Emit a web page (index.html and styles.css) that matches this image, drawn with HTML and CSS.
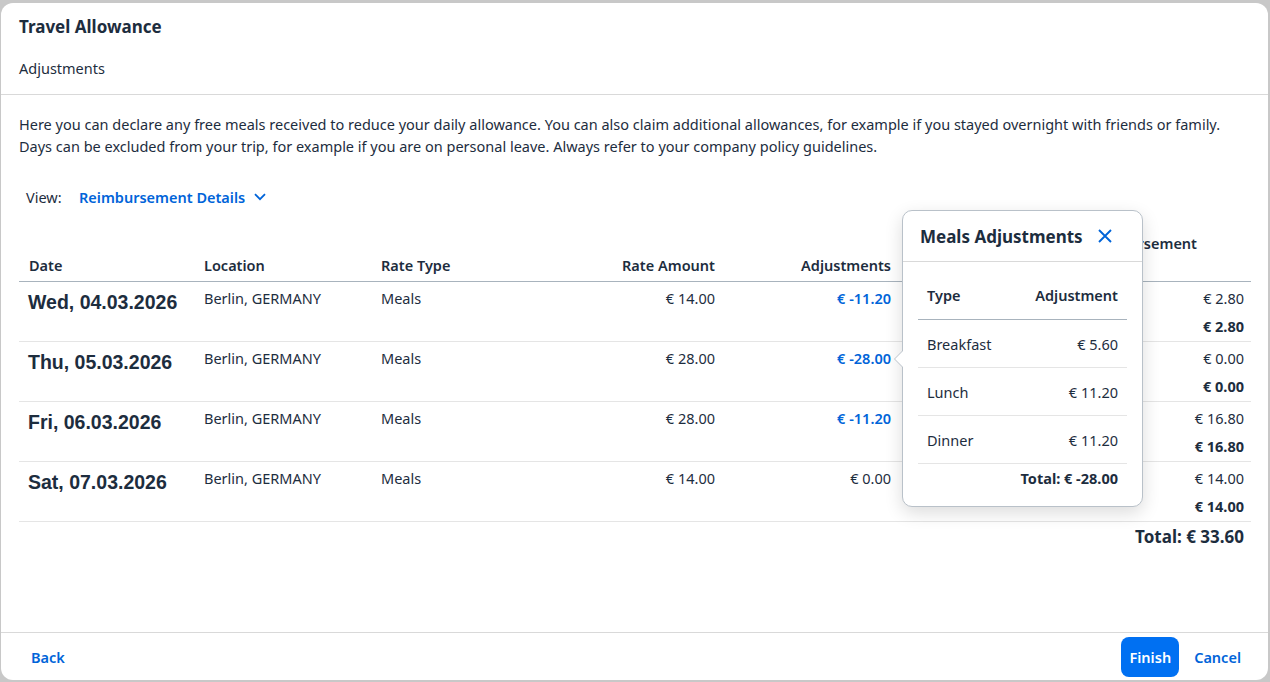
FILE: index.html
```html
<!DOCTYPE html>
<html>
<head>
    <title>Travel Allowance - Adjustments</title>
    <link rel="stylesheet" href="styles.css">
</head>
<body>
    <div class="dialog">
        <div class="dialog-header">
            <div class="title">Travel Allowance</div>
            <div class="subtitle">Adjustments</div>
        </div>

        <div class="dialog-content">
            <p class="intro">Here you can declare any free meals received to reduce your daily allowance. You can also claim additional allowances, for example if you stayed overnight with friends or family. Days can be excluded from your trip, for example if you are on personal leave. Always refer to your company policy guidelines.</p>

            <div class="view-row">
                <span class="view-label">View:</span>
                <a href="#" class="view-select">Reimbursement Details
                    <svg class="chevron" width="12" height="8" viewBox="0 0 12 8"><path d="M1 1.2 L6 6.2 L11 1.2" fill="none" stroke="#0064d9" stroke-width="1.8"/></svg>
                </a>
            </div>

            <div class="table-wrap">
                <table class="days">
                    <colgroup>
                        <col style="width:175px">
                        <col style="width:177px">
                        <col style="width:170px">
                        <col style="width:184px">
                        <col style="width:176px">
                        <col style="width:350px">
                    </colgroup>
                    <thead>
                        <tr>
                            <th>Date</th>
                            <th>Location</th>
                            <th>Rate Type</th>
                            <th class="num">Rate Amount</th>
                            <th class="num">Adjustments</th>
                            <th class="num reimb-head">Reimbursement<br>&nbsp;</th>
                        </tr>
                    </thead>
                    <tbody>
                        <tr>
                            <td class="date">Wed, 04.03.2026</td>
                            <td>Berlin, GERMANY</td>
                            <td>Meals</td>
                            <td class="num">€ 14.00</td>
                            <td class="num"><a href="#" class="adj-link">€ -11.20</a></td>
                            <td class="num reimb"><div>€ 2.80</div><div class="sum">€ 2.80</div></td>
                        </tr>
                        <tr>
                            <td class="date">Thu, 05.03.2026</td>
                            <td>Berlin, GERMANY</td>
                            <td>Meals</td>
                            <td class="num">€ 28.00</td>
                            <td class="num"><a href="#" class="adj-link">€ -28.00</a></td>
                            <td class="num reimb"><div>€ 0.00</div><div class="sum">€ 0.00</div></td>
                        </tr>
                        <tr>
                            <td class="date">Fri, 06.03.2026</td>
                            <td>Berlin, GERMANY</td>
                            <td>Meals</td>
                            <td class="num">€ 28.00</td>
                            <td class="num"><a href="#" class="adj-link">€ -11.20</a></td>
                            <td class="num reimb"><div>€ 16.80</div><div class="sum">€ 16.80</div></td>
                        </tr>
                        <tr>
                            <td class="date">Sat, 07.03.2026</td>
                            <td>Berlin, GERMANY</td>
                            <td>Meals</td>
                            <td class="num">€ 14.00</td>
                            <td class="num">€ 0.00</td>
                            <td class="num reimb"><div>€ 14.00</div><div class="sum">€ 14.00</div></td>
                        </tr>
                    </tbody>
                </table>
                <div class="grand-total">Total: € 33.60</div>

                <!-- popover opened from the Thu adjustment -->
                <div class="popover">
                    <span class="arrow"></span>
                    <div class="popover-header">
                        <span class="popover-title">Meals Adjustments</span>
                        <svg class="close" width="14" height="14" viewBox="0 0 14 14"><path d="M1 1 L13 13 M13 1 L1 13" stroke="#0064d9" stroke-width="1.9"/></svg>
                    </div>
                    <div class="popover-body">
                        <table class="meals">
                            <thead>
                                <tr><th>Type</th><th class="num">Adjustment</th></tr>
                            </thead>
                            <tbody>
                                <tr><td>Breakfast</td><td class="num">€ 5.60</td></tr>
                                <tr><td>Lunch</td><td class="num">€ 11.20</td></tr>
                                <tr><td>Dinner</td><td class="num">€ 11.20</td></tr>
                            </tbody>
                        </table>
                        <div class="meals-total">Total: € -28.00</div>
                    </div>
                </div>
            </div>
        </div>

        <div class="dialog-footer">
            <a href="#" class="btn-ghost">Back</a>
            <div class="footer-right">
                <a href="#" class="btn-primary">Finish</a>
                <a href="#" class="btn-ghost">Cancel</a>
            </div>
        </div>
    </div>
</body>
</html>
```

FILE: styles.css
```css
body {
    margin: 0;
    background: #c8c8c8;
    font-family: "Noto Sans", "Liberation Sans", Arial, sans-serif;
    font-size: 14.5px;
    color: #1d2d3e;
    height: 682px;
    overflow: hidden;
}
a { text-decoration: none; }

.dialog {
    box-sizing: border-box;
    height: 677px;
    margin: 3px 2px 0 1px;
    background: #fff;
    border-radius: 12px;
    display: flex;
    flex-direction: column;
    overflow: hidden;
}

.dialog-header {
    padding: 0 18px;
    border-bottom: 1px solid #d9d9d9;
}
.title {
    height: 47px;
    line-height: 47px;
    font-size: 17px;
    font-weight: bold;
}
.subtitle {
    line-height: 36px;
    padding-bottom: 8px;
}

.dialog-content {
    flex: 1;
    padding: 18px 18px 0;
}
.intro {
    margin: 0;
    line-height: 22px;
}

.view-row {
    display: flex;
    align-items: center;
    height: 36px;
    margin-top: 22px;
    padding-left: 7px;
}
.view-label { width: 53px; }
.view-select {
    color: #0064d9;
    font-weight: 600;
    display: flex;
    align-items: center;
    gap: 9px;
}

.table-wrap {
    position: relative;
    padding-top: 17px;
}

.days {
    width: 1232px;
    table-layout: fixed;
    border-collapse: collapse;
}
.days th {
    text-align: left;
    font-weight: 600;
    line-height: 22px;
    padding: 0 10px 5px;
    vertical-align: bottom;
    border-bottom: 1px solid #a8b3bd;
}
.days td {
    height: 60px;
    box-sizing: border-box;
    vertical-align: top;
    padding: 5px 10px 0;
    line-height: 22px;
    border-bottom: 1px solid #e5e5e5;
}
.days .num { text-align: right; }
.days td.date {
    font-family: "Liberation Sans", Arial, sans-serif;
    font-size: 19.5px;
    font-weight: bold;
    line-height: 30px;
    padding: 5px 6px 0 9px;
}
.days td.reimb { padding-right: 7px; }
.days th.reimb-head { padding-right: 54px; }
.reimb .sum {
    font-weight: bold;
    margin-top: 6px;
}
.adj-link {
    color: #0064d9;
    font-weight: 600;
}

.grand-total {
    text-align: right;
    font-size: 17px;
    font-weight: bold;
    line-height: 24px;
    padding: 3px 6px 0 0;
}

.popover {
    position: absolute;
    left: 883px;
    top: -5px;
    width: 241px;
    height: 297px;
    box-sizing: border-box;
    background: #fff;
    border: 1px solid #b9c1c9;
    border-radius: 10px;
    box-shadow: 0 6px 18px rgba(0, 0, 0, 0.14);
}
.arrow {
    position: absolute;
    left: -9px;
    top: 139px;
    width: 0;
    height: 0;
    border-top: 9px solid transparent;
    border-bottom: 9px solid transparent;
    border-right: 9px solid #b9c1c9;
}
.arrow::after {
    content: "";
    position: absolute;
    left: 1px;
    top: -8px;
    border-top: 8px solid transparent;
    border-bottom: 8px solid transparent;
    border-right: 8px solid #fff;
}
.popover-header {
    height: 50px;
    display: flex;
    align-items: center;
    justify-content: space-between;
    padding: 0 30px 0 17px;
    border-bottom: 1px solid #d9d9d9;
}
.popover-title {
    font-size: 17px;
    font-weight: bold;
}
.popover-body { padding: 0 15px; }
.meals {
    width: 100%;
    border-collapse: collapse;
}
.meals th {
    text-align: left;
    font-weight: 600;
    line-height: 22px;
    padding: 22px 9px 13px;
    border-bottom: 1px solid #a8b3bd;
}
.meals td {
    height: 48px;
    box-sizing: border-box;
    padding: 0 9px;
    border-bottom: 1px solid #e5e5e5;
}
.meals .num { text-align: right; }
.meals-total {
    text-align: right;
    font-weight: bold;
    line-height: 22px;
    padding: 3px 9px 0 0;
}

.dialog-footer {
    height: 48px;
    box-sizing: border-box;
    border-top: 1px solid #d9d9d9;
    display: flex;
    align-items: center;
    justify-content: space-between;
    padding: 0 15px 0 18px;
}
.footer-right {
    display: flex;
    align-items: center;
    gap: 3px;
}
.btn-ghost {
    color: #0064d9;
    font-weight: 600;
    padding: 0 12px;
    line-height: 40px;
}
.btn-primary {
    background: #0070f2;
    color: #fff;
    font-weight: 600;
    border-radius: 8px;
    padding: 0 8px;
    line-height: 40px;
}
```
